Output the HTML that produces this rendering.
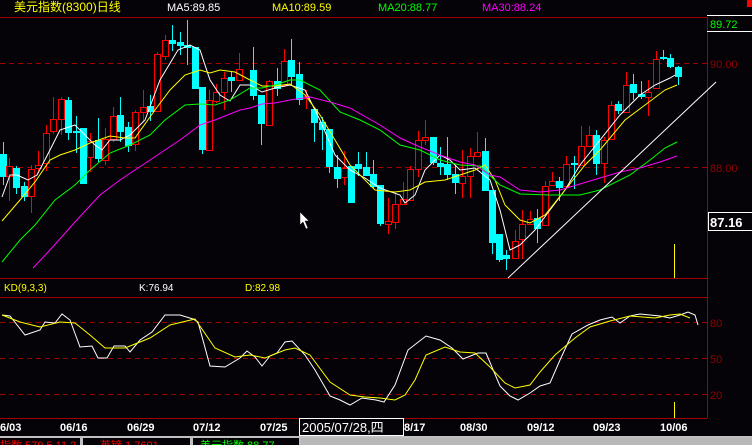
<!DOCTYPE html>
<html><head><meta charset="utf-8">
<style>
html,body{margin:0;padding:0;background:#050308;width:752px;height:445px;overflow:hidden}
svg{display:block}
text{font-family:"Liberation Sans","Noto Sans CJK SC",sans-serif}
</style></head><body>
<svg id="s" width="752" height="445" viewBox="0 0 752 445" xmlns="http://www.w3.org/2000/svg" shape-rendering="crispEdges">
<rect width="752" height="445" fill="#050308"/>
<!-- frame lines -->
<line x1="0" y1="17.5" x2="707" y2="17.5" stroke="#a00000"/>
<line x1="707.5" y1="17" x2="707.5" y2="418" stroke="#a00000"/>
<line x1="0" y1="278.5" x2="707" y2="278.5" stroke="#a00000"/>
<line x1="0" y1="297.5" x2="707" y2="297.5" stroke="#a00000"/>
<line x1="0" y1="418.5" x2="707" y2="418.5" stroke="#a00000"/>
<g stroke="#a00000" stroke-dasharray="5,4">
<line x1="0" y1="63.5" x2="707" y2="63.5"/>
<line x1="0" y1="167.5" x2="707" y2="167.5"/>
<line x1="0" y1="322.5" x2="707" y2="322.5"/>
<line x1="0" y1="358.5" x2="707" y2="358.5"/>
<line x1="0" y1="394.5" x2="707" y2="394.5"/>
</g>
<g id="candles"></g>
<g id="lines" fill="none" shape-rendering="auto" stroke-width="1"></g>
<!-- volume yellow -->
<line x1="674.5" y1="244" x2="674.5" y2="278" stroke="#ffff00"/>
<line x1="674.5" y1="402" x2="674.5" y2="418" stroke="#ffff00"/>
<!-- header -->
<text x="14" y="11" font-size="12" fill="#ffff00">美元指数(8300)日线</text>
<text x="167" y="11" font-size="11" fill="#ffffff">MA5:89.85</text>
<text x="272" y="11" font-size="11" fill="#ffff00">MA10:89.59</text>
<text x="378" y="11" font-size="11" fill="#00ff00">MA20:88.77</text>
<text x="482" y="11" font-size="11" fill="#ff00ff">MA30:88.24</text>
<rect x="747" y="0" width="5" height="7" fill="#ff0000"/>
<!-- right axis -->
<line x1="707" y1="15.5" x2="752" y2="15.5" stroke="#fff"/>
<line x1="707" y1="31.5" x2="752" y2="31.5" stroke="#fff"/>
<text x="710" y="28" font-size="11" fill="#00ff00">89.72</text>
<text x="710" y="68" font-size="11" fill="#900000">90.00</text>
<text x="710" y="172" font-size="11" fill="#900000">88.00</text>
<rect x="708.5" y="212.5" width="44" height="18" fill="none" stroke="#fff"/>
<text x="710" y="227" font-size="13" font-weight="bold" fill="#fff">87.16</text>
<text x="710" y="327" font-size="11" fill="#900000">80</text>
<text x="710" y="363" font-size="11" fill="#900000">50</text>
<text x="710" y="399" font-size="11" fill="#900000">20</text>
<!-- KD header -->
<text x="4" y="291" font-size="10" fill="#ffff00">KD(9,3,3)</text>
<text x="139" y="291" font-size="10" fill="#ffffff">K:76.94</text>
<text x="245" y="291" font-size="10" fill="#ffff00">D:82.98</text>
<!-- date axis -->
<g font-size="11" font-weight="bold" fill="#fff" font-family="Liberation Mono">
<text x="0" y="431">6/03</text>
<text x="60" y="431">06/16</text>
<text x="127" y="431">06/29</text>
<text x="193" y="431">07/12</text>
<text x="260" y="431">07/25</text>
<text x="404" y="431">8/17</text>
<text x="460" y="431">08/30</text>
<text x="527" y="431">09/12</text>
<text x="593" y="431">09/23</text>
<text x="660" y="431">10/06</text>
</g>
<rect x="299.5" y="418.5" width="104" height="17" fill="#050308" stroke="#fff"/>
<text x="302" y="432" font-size="13" fill="#fff">2005/07/28,四</text>
<!-- bottom strip -->
<rect x="0" y="436" width="752" height="9" fill="#c0c0c0"/>
<rect x="0" y="438" width="80" height="7" fill="#050308"/>
<rect x="83" y="438" width="107" height="7" fill="#050308"/>
<rect x="193" y="438" width="106" height="7" fill="#050308"/>
<rect x="301" y="438" width="451" height="7" fill="#b8b8b8"/>
<text x="0" y="449" font-size="11" fill="#ff0000">指数 579.5 11.2</text>
<text x="100" y="449" font-size="11" fill="#ff0000">英镑 1.7691</text>
<text x="200" y="449" font-size="11" fill="#00ff00">美元指数 88.77</text>
<!-- cursor -->
<path d="M300 212 L300 225 L303 222 L306 229 L308 228 L305 221 L309 221 Z" fill="#fff" stroke="#000" stroke-width="0.5" shape-rendering="auto"/>
</svg>
<script>
var C=[[0,'c',154,177,142,185],[6,'r',166,176,158,201],[13,'c',168,188,166,194],[21,'c',186,197,182,201],[28,'r',169,196,165,213],[35,'r',165,168,151,173],[43,'r',133,163,125,171],[50,'r',119,131,97,134],[58,'r',99,119,97,135],[65,'c',100,133,97,140],[73,'c',131,133,116,153],[80,'c',128,184,128,184],[87,'r',141,157,133,172],[95,'c',140,159,118,162],[102,'r',139,160,128,165],[110,'r',116,139,107,142],[117,'c',115,132,97,142],[125,'c',127,146,122,152],[132,'r',112,144,110,151],[140,'r',107,112,90,122],[147,'c',106,112,95,121],[154,'r',54,111,52,111],[162,'r',40,56,35,60],[169,'c',40,44,25,51],[177,'c',42,46,32,55],[184,'c',45,48,20,65],[192,'c',47,89,47,89],[199,'c',87,150,87,154],[206,'r',100,150,90,151],[213,'r',92,101,84,103],[221,'r',78,92,72,110],[228,'c',77,81,71,92],[236,'r',69,80,53,80],[250,'c',70,96,47,100],[258,'c',95,124,95,145],[266,'r',81,125,80,125],[274,'c',81,89,68,96],[281,'r',61,85,49,87],[288,'c',60,77,39,85],[296,'c',74,100,62,105],[303,'r',96,98,90,109],[311,'c',109,123,109,142],[319,'c',122,130,117,150],[326,'c',129,167,129,173],[334,'c',167,179,155,188],[341,'r',168,177,151,185],[348,'c',166,203,166,203],[355,'c',164,169,152,176],[363,'c',167,176,152,176],[370,'c',174,187,160,188],[377,'c',185,224,185,226],[385,'r',221,224,198,234],[392,'r',204,222,194,229],[400,'r',199,204,182,204],[407,'r',169,200,166,200],[415,'r',140,169,131,177],[422,'r',137,140,120,145],[430,'c',137,163,137,165],[437,'c',163,167,147,175],[444,'c',164,175,137,180],[452,'c',174,183,165,194],[459,'r',176,183,150,198],[467,'r',156,176,148,198],[474,'r',152,156,132,156],[482,'c',151,191,138,191],[489,'c',190,243,190,254],[496,'c',234,260,234,262],[503,'c',255,259,250,270],[512,'r',241,258,230,258],[519,'r',224,239,210,259],[527,'r',219,224,211,224],[534,'c',218,229,209,243],[542,'r',186,225,181,225],[549,'r',181,185,172,185],[556,'c',181,188,177,201],[563,'r',164,186,156,186],[571,'c',163,165,156,189],[578,'r',146,165,126,165],[586,'r',135,146,126,146],[593,'c',135,164,130,175],[601,'r',140,163,137,183],[608,'r',105,139,101,139],[615,'c',104,111,101,114],[623,'r',85,112,72,112],[630,'c',84,93,74,100],[638,'c',94,97,81,99],[645,'r',92,97,80,116],[653,'r',59,88,51,88],[660,'c',57,59,50,60],[667,'c',58,67,54,68],[675,'c',67,77,66,85]];
var ns='http://www.w3.org/2000/svg',g=document.getElementById('candles'),h='';
C.forEach(function(c){var x=c[0],col=c[1]=='r'?'#ff0000':'#00ffff',w=6,cx=x+3;
h+='<line x1="'+(cx+.5)+'" y1="'+c[4]+'" x2="'+(cx+.5)+'" y2="'+c[5]+'" stroke="'+col+'"/>';
var t=Math.min(c[2],c[3]),b=Math.max(c[2],c[3]);if(b-t<2)b=t+2;
if(c[1]=='r')h+='<rect x="'+(x+.5)+'" y="'+(t+.5)+'" width="'+w+'" height="'+(b-t)+'" fill="#050308" stroke="#ff0000"/>';
else h+='<rect x="'+x+'" y="'+t+'" width="'+(w+1)+'" height="'+(b-t)+'" fill="#00ffff"/>';});
g.innerHTML=h;
function P(a,c){return '<polyline stroke="'+c+'" points="'+a.join(' ')+'"/>';}
var L='';
L+=P(['2,197','10,175','17,175','28,180','37,175','50,150','60,130','75,125','85,135','95,145','102,150','110,140','120,140','130,135','145,120','160,80','178,50','190,45','200,50','210,80','220,95','230,101','240,85','250,85','262,92','275,88','290,85','305,90','320,120','335,155','350,170','365,178','380,188','400,195','405,203','415,195','425,170','440,155','450,160','460,170','475,168','490,180','500,210','510,250','520,245','535,230','550,210','565,190','580,165','600,140','620,115','640,95','655,85','670,78','675,75'],'#ffffff');
L+=P(['2,221','20,200','35,182','50,160','60,155','75,150','90,143','110,136','125,138','135,138','155,110','170,90','185,75','200,70','210,73','220,70','235,72','250,80','262,86','275,86','290,84','305,95','320,115','335,140','350,165','375,190','395,192','410,190','425,182','445,180','460,175','475,170','485,165','495,180','505,205','520,220','530,223','545,215','565,190','585,165','600,150','625,120','645,105','665,90','677,85'],'#ffff00');
L+=P(['2,262','20,240','35,225','55,200','75,185','90,170','110,153','130,145','150,135','165,120','185,105','200,104','215,105','230,100','250,88','262,88','275,85','290,80','300,80','320,90','340,112','360,120','380,130','400,145','420,150','440,160','460,165','480,166','500,185','520,194','550,195','580,195','600,190','630,175','650,160','665,148','677,142'],'#00ff00');
L+=P(['33,268','50,250','75,222','100,195','120,180','150,160','180,140','200,125','215,120','240,110','250,108','262,104','275,103','290,100','310,97','330,102','350,108','380,125','400,138','420,147','440,155','460,162','475,165','490,175','500,177','520,190','540,192','560,190','580,184','600,178','620,172','640,168','660,162','677,156'],'#ff00ff');
L+=P(['508,278','716,82'],'#ffffff');
L+=P(['2,315','10,316','25,335','40,330','45,322','55,323','62,314','70,320','80,347','92,346','98,358','107,358','114,346','125,346','130,352','140,340','152,332','165,315','180,315','193,319','198,322','210,366','225,367','240,358','247,351','255,357','262,366','270,356','277,353','285,342','292,341','305,355','315,370','330,396','340,400','350,405','362,398','376,400','384,402','395,385','408,350','426,336','440,340','452,348','463,359','478,353','486,353','500,386','510,396','518,400','530,393','540,386','550,383','560,360','572,334','588,325','600,320','612,317','620,323','630,316','640,314','660,316','670,318','680,315','688,312','695,315','698,325'],'#ffffff');
L+=P(['2,315','20,322','40,327','60,322','75,323','90,335','105,348','125,348','150,338','170,325','195,319','215,348','235,357','250,355','265,358','285,350','295,348','310,355','330,382','350,395','365,397','380,398','395,400','405,395','415,380','426,355','445,347','460,352','475,353','490,367','505,383','515,388','530,385','540,372','555,355','575,338','590,327','610,321','630,316','655,318','670,315','680,314','690,318'],'#ffff00');
document.getElementById('lines').innerHTML=L;
</script>
</body></html>
